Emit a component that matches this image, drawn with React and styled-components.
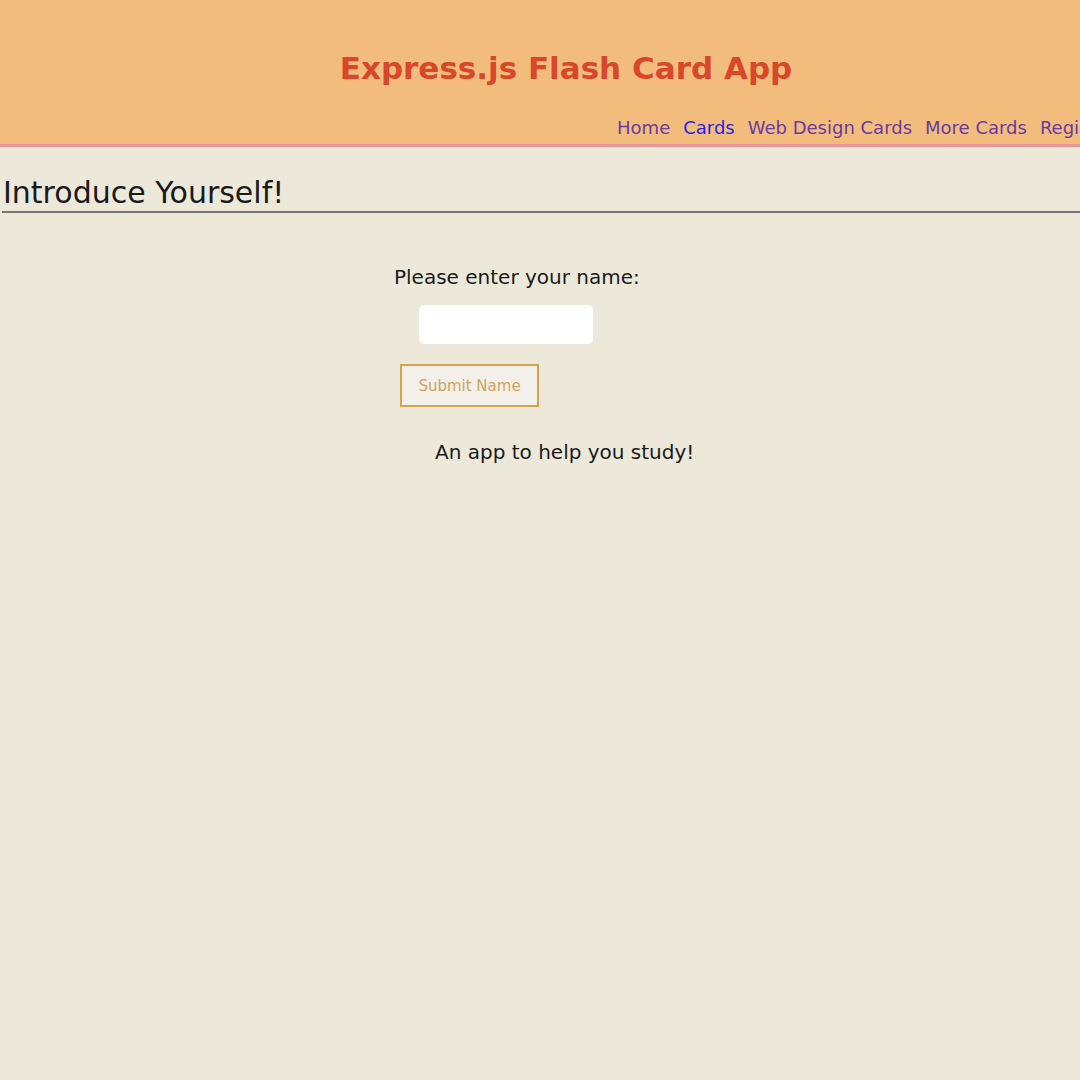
import React from "react";
import styled, { createGlobalStyle } from "styled-components";

const Global = createGlobalStyle`
  html, body { margin: 0; padding: 0; }
  body {
    background: #ede9da;
    font-family: "DejaVu Sans", "Liberation Sans", sans-serif;
    color: #1a1a1a;
    overflow: hidden;
  }
`;

const Page = styled.div`
  width: 1132px;
  min-height: 1080px;
`;

const Header = styled.header`
  background: #f2bd7c;
  border-bottom: 3px solid #e8959a;
  height: 144px;
  display: flex;
  flex-direction: column;
`;

const Title = styled.h1`
  margin: 45px 0 0;
  text-align: center;
  font-size: 31px;
  line-height: 46px;
  font-weight: bold;
  color: #d9472b;
`;

const Nav = styled.nav`
  margin-top: 26px;
  padding-right: 18px;
  display: flex;
  justify-content: flex-end;
  gap: 13px;
`;

const NavLink = styled.a`
  font-size: 18px;
  line-height: 22px;
  text-decoration: none;
  white-space: nowrap;
  color: ${(p) => (p.$active ? "#2a1ee0" : "#6a3aa2")};
`;

const Main = styled.main`
  display: flex;
  flex-direction: column;
`;

const Heading = styled.h2`
  margin: 28px 0 0 3px;
  font-size: 30px;
  line-height: 36px;
  font-weight: normal;
  color: #1a1a1a;
`;

const Rule = styled.hr`
  margin: 0 0 0 2px;
  height: 0;
  border: none;
  border-top: 2px solid #777;
`;

const Form = styled.form`
  display: flex;
  flex-direction: column;
  margin-top: 50px;
`;

const Label = styled.label`
  margin-left: 394px;
  font-size: 20px;
  line-height: 28px;
`;

const Input = styled.input`
  margin: 14px 0 0 419px;
  width: 174px;
  height: 39px;
  box-sizing: border-box;
  border: none;
  border-radius: 5px;
  background: #fff;
  outline: none;
`;

const Button = styled.button`
  margin: 20px 0 0 400px;
  width: 139px;
  height: 43px;
  box-sizing: border-box;
  border: 2px solid #d4a24c;
  background: #f3f0e9;
  color: #d0a460;
  font-family: inherit;
  font-size: 15px;
  padding: 0;
  align-self: flex-start;
`;

const Tagline = styled.p`
  margin: 31px 0 0 435px;
  font-size: 20px;
  line-height: 28px;
`;

export default function App() {
  return (
    <Page>
      <Global />
      <Header>
        <Title>Express.js Flash Card App</Title>
        <Nav>
          <NavLink href="#">Home</NavLink>
          <NavLink href="#" $active>Cards</NavLink>
          <NavLink href="#">Web Design Cards</NavLink>
          <NavLink href="#">More Cards</NavLink>
          <NavLink href="#">Register</NavLink>
        </Nav>
      </Header>
      <Main>
        <Heading>Introduce Yourself!</Heading>
        <Rule />
        <Form onSubmit={(e) => e.preventDefault()}>
          <Label htmlFor="name">Please enter your name:</Label>
          <Input id="name" type="text" />
          <Button type="submit">Submit Name</Button>
        </Form>
        <Tagline>An app to help you study!</Tagline>
      </Main>
    </Page>
  );
}
